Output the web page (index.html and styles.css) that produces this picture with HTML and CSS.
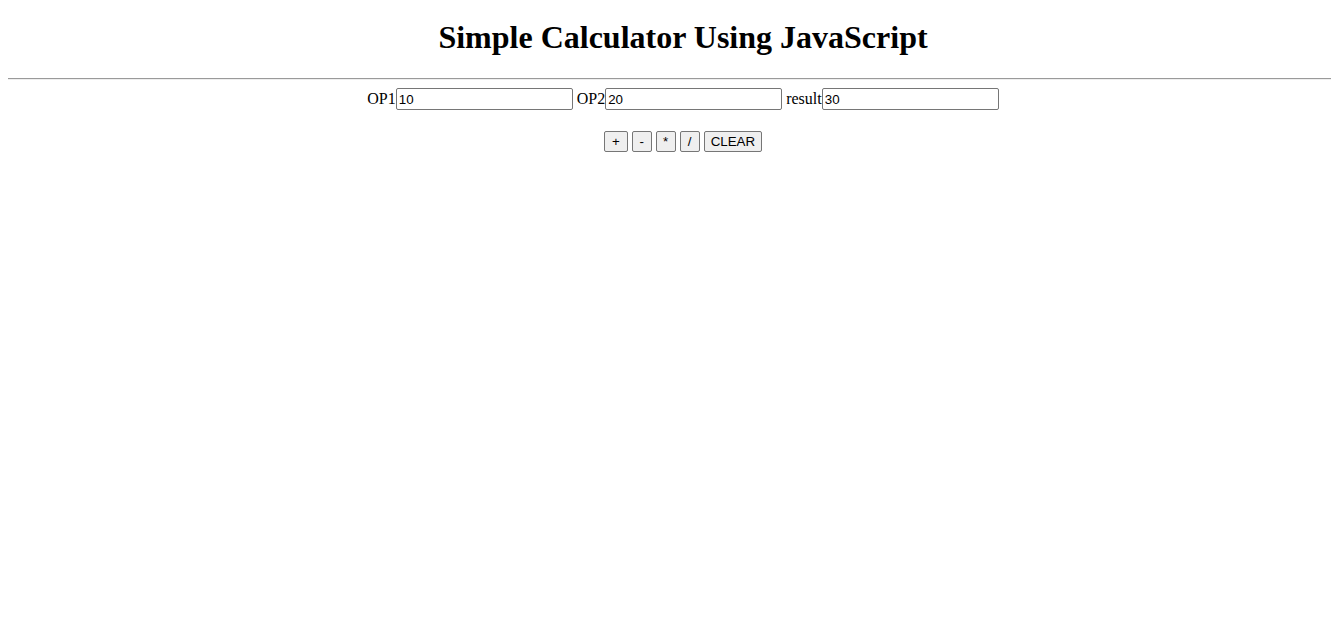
FILE: index.html
```html
<!DOCTYPE html>
<html class="root">
<head>
<meta charset="utf-8">
<title>Simple Calculator</title>
<link rel="stylesheet" href="styles.css">
</head>
<body class="page">
<h1 class="title">Simple Calculator Using JavaScript</h1>
<hr class="rule">
<div class="calc">
  <div class="row">OP1<input class="field" type="text" value="10"> OP2<input class="field" type="text" value="20"> result<input class="field" type="text" value="30"></div>
  <div class="row buttons"><button class="btn plus">+</button> <button class="btn">-</button> <button class="btn">*</button> <button class="btn">/</button> <button class="btn">CLEAR</button></div>
</div>
</body>
</html>
```
FILE: styles.css
```css
.root {
  overflow: hidden;
}
.page {
  margin: 8px;
  width: 1350px;
  font-family: "Liberation Serif", "Times New Roman", serif;
  font-size: 16px;
  color: #000;
  background: #fff;
}
.title {
  text-align: center;
  font-size: 32px;
  font-weight: bold;
  margin: 11px 0 22px 0;
  line-height: 37px;
}
.rule {
  margin: 0;
  border: none;
  border-top: 1px solid #9a9a9a;
  border-bottom: 1px solid #eeeeee;
  height: 0;
}
.calc {
  text-align: center;
}
.row {
  margin-top: 8px;
  font-size: 16px;
  line-height: 22px;
}
.field {
  box-sizing: border-box;
  width: 177px;
  height: 22px;
  margin: 0;
  padding: 1px 2px;
  border: 1px solid #767676;
  border-radius: 2px;
  font-family: "Liberation Sans", Arial, sans-serif;
  font-size: 13.33px;
  vertical-align: bottom;
  background: #fff;
  color: #000;
}
.buttons {
  margin-top: 19px;
}
.btn {
  box-sizing: border-box;
  height: 21px;
  margin: 0;
  padding: 1px 6px;
  min-width: 20px;
  border: 1px solid #767676;
  border-radius: 2px;
  background: #efefef;
  font-family: "Liberation Sans", Arial, sans-serif;
  font-size: 13.33px;
  color: #000;
  vertical-align: middle;
}
.plus {
  padding: 1px 7px;
}
```
